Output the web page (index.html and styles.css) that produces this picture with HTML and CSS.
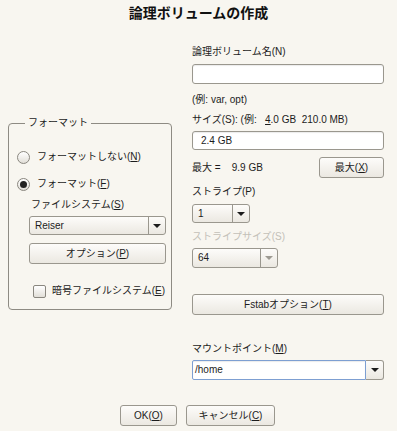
FILE: index.html
```html
<!DOCTYPE html>
<html lang="ja">
  <head>
    <meta charset="UTF-8" />
    <meta name="viewport" content="width=device-width, initial-scale=1.0" />
    <title>論理ボリュームの作成</title>
    <link rel="stylesheet" href="styles.css">
  </head>
  <body>
    <div class="dialog">
      <h1 class="title">論理ボリュームの作成</h1>

      <div class="content">
        <!-- Format frame -->
        <fieldset class="frame">
          <legend>フォーマット</legend>
          <label class="radio-row first">
            <span class="radio"></span>
            <span>フォーマットしない(<u>N</u>)</span>
          </label>
          <label class="radio-row second">
            <span class="radio checked"></span>
            <span>フォーマット(<u>F</u>)</span>
          </label>
          <div class="label fs-label">ファイルシステム(<u>S</u>)</div>
          <div class="combo fs-combo">
            <span class="combo-text">Reiser</span>
            <span class="combo-arrow"><span class="arrow"></span></span>
          </div>
          <button class="btn option-btn">オプション(<u>P</u>)</button>
          <label class="check-row">
            <span class="checkbox"></span>
            <span>暗号ファイルシステム(<u>E</u>)</span>
          </label>
        </fieldset>

        <!-- Volume settings -->
        <div class="settings">
          <div class="label name-label">論理ボリューム名(N)</div>
          <div class="entry name-entry"></div>
          <div class="label hint">(例: var, opt)</div>
          <div class="label size-label">サイズ(S): (例:&nbsp;&nbsp; <u>4</u>.0 GB&nbsp; 210.0 MB)</div>
          <div class="entry size-entry">2.4 GB</div>
          <div class="max-row">
            <span class="max-text">最大 =&nbsp;&nbsp;&nbsp; 9.9 GB</span>
            <button class="btn max-btn">最大(<u>X</u>)</button>
          </div>
          <div class="label stripe-label">ストライプ(P)</div>
          <div class="combo stripe-combo">
            <span class="combo-text">1</span>
            <span class="combo-arrow"><span class="arrow"></span></span>
          </div>
          <div class="label stripe-size-label disabled">ストライプサイズ(S)</div>
          <div class="combo stripe-size-combo disabled">
            <span class="combo-text">64</span>
            <span class="combo-arrow"><span class="arrow"></span></span>
          </div>
          <button class="btn fstab-btn">Fstabオプション(<u>T</u>)</button>
          <div class="label mount-label">マウントポイント(<u>M</u>)</div>
          <div class="mount-combo">
            <span class="entry focused">/home</span>
            <span class="btn mount-arrow"><span class="arrow"></span></span>
          </div>
        </div>
      </div>

      <div class="footer">
        <button class="btn ok-btn">OK(<u>O</u>)</button>
        <button class="btn cancel-btn">キャンセル(<u>C</u>)</button>
      </div>
    </div>
  </body>
</html>
```

FILE: styles.css
```css
* {
  margin: 0;
  padding: 0;
  box-sizing: border-box;
}

body {
  width: 397px;
  height: 431px;
  overflow: hidden;
  background: #f8f6f0;
  color: #1c1c1c;
  font-family: "Liberation Sans", "Noto Sans CJK JP", sans-serif;
  font-size: 10px;
  line-height: 14px;
}

u {
  text-decoration: underline;
  text-underline-offset: 1px;
}

.title {
  padding-top: 3px;
  height: 24px;
  text-align: center;
  font-size: 14px;
  line-height: 18px;
  font-weight: bold;
  font-family: "Noto Sans CJK JP", sans-serif;
  color: #111;
}

.content {
  display: flex;
  align-items: flex-start;
  padding-left: 8px;
}

/* Buttons and combos */
.btn {
  display: flex;
  align-items: center;
  justify-content: center;
  height: 21px;
  border: 1px solid #9a978e;
  border-radius: 3px;
  background: linear-gradient(#fdfcfa, #ebe8e1);
  font: inherit;
  color: inherit;
}

.combo {
  display: flex;
  height: 19px;
  border: 1px solid #9a978e;
  border-radius: 3px;
  background: linear-gradient(#fdfcfa, #ebe8e1);
}

.combo-text {
  flex: 1;
  padding-left: 5px;
  line-height: 17px;
}

.combo-arrow {
  width: 17px;
  border-left: 1px solid #9a978e;
  display: flex;
  align-items: center;
  justify-content: center;
}

.arrow {
  width: 0;
  height: 0;
  border-left: 4px solid transparent;
  border-right: 4px solid transparent;
  border-top: 4px solid #1c1c1c;
}

.combo.disabled .arrow {
  border-top-color: #9d9a92;
}

.entry {
  display: block;
  height: 20px;
  border: 1px solid #9a978e;
  border-radius: 3px;
  background: #fff;
  box-shadow: inset 0 1px 1px rgba(0, 0, 0, 0.08);
  line-height: 18px;
  padding-left: 8px;
}

/* Format frame */
.frame {
  margin-top: 92px;
  width: 164px;
  min-width: 0;
  flex-shrink: 0;
  border: 1px solid #8e8b83;
  border-radius: 4px;
  padding: 0 5px 11px 8px;
}

.frame legend {
  margin-left: 8px;
  padding: 0 3px;
  line-height: 14px;
}

.radio-row,
.check-row {
  display: flex;
  align-items: center;
  gap: 7px;
  height: 14px;
  white-space: nowrap;
}

.radio-row.first {
  margin-top: 20px;
}

.radio-row.second {
  margin-top: 13px;
}

.radio {
  flex-shrink: 0;
  width: 13px;
  height: 13px;
  border: 1px solid #8a877f;
  border-radius: 50%;
  background: linear-gradient(#ffffff, #e2dfd8);
  display: flex;
  align-items: center;
  justify-content: center;
}

.radio.checked::after {
  content: "";
  width: 7px;
  height: 7px;
  border-radius: 50%;
  background: #222;
}

.fs-label {
  margin-top: 7px;
  margin-left: 14px;
}

.fs-combo {
  margin-top: 4px;
  margin-left: 12px;
  width: 137px;
}

.option-btn {
  margin-top: 8px;
  margin-left: 12px;
  width: 137px;
}

.check-row {
  margin-top: 20px;
  margin-left: 16px;
  gap: 6px;
}

.checkbox {
  flex-shrink: 0;
  width: 13px;
  height: 13px;
  border: 1px solid #8a877f;
  border-radius: 2px;
  background: linear-gradient(#ffffff, #e2dfd8);
}

/* Right settings column */
.settings {
  margin-left: 20px;
  margin-top: 21px;
  width: 192px;
  flex-shrink: 0;
  display: flex;
  flex-direction: column;
}

.label {
  white-space: nowrap;
}

.label.disabled {
  color: #c3c0b8;
}

.name-entry {
  margin-top: 5px;
}

.hint {
  margin-top: 9px;
}

.size-label {
  margin-top: 6px;
}

.size-entry {
  margin-top: 4px;
  height: 19px;
  line-height: 17px;
}

.max-row {
  margin-top: 7px;
  display: flex;
  align-items: center;
  justify-content: space-between;
}

.max-btn {
  width: 65px;
}

.stripe-label {
  margin-top: 7px;
}

.stripe-combo {
  margin-top: 5px;
  width: 58px;
}

.stripe-size-label {
  margin-top: 7px;
}

.stripe-size-combo {
  margin-top: 4px;
  width: 86px;
  height: 20px;
}

.fstab-btn {
  margin-top: 26px;
  width: 192px;
}

.mount-label {
  margin-top: 27px;
}

.mount-combo {
  margin-top: 4px;
  display: flex;
  height: 20px;
}

.mount-combo .entry {
  flex: 1;
  border: 1px solid #7d9fd2;
  border-radius: 2px 0 0 2px;
  padding-left: 2px;
}

.mount-arrow {
  width: 18px;
  height: 20px;
  border-radius: 0 3px 3px 0;
  border-left: none;
}

/* Dialog buttons */
.footer {
  display: flex;
  justify-content: center;
  gap: 9px;
  margin-top: 25px;
  padding-right: 2px;
}

.ok-btn {
  width: 57px;
}

.cancel-btn {
  width: 89px;
}
```
